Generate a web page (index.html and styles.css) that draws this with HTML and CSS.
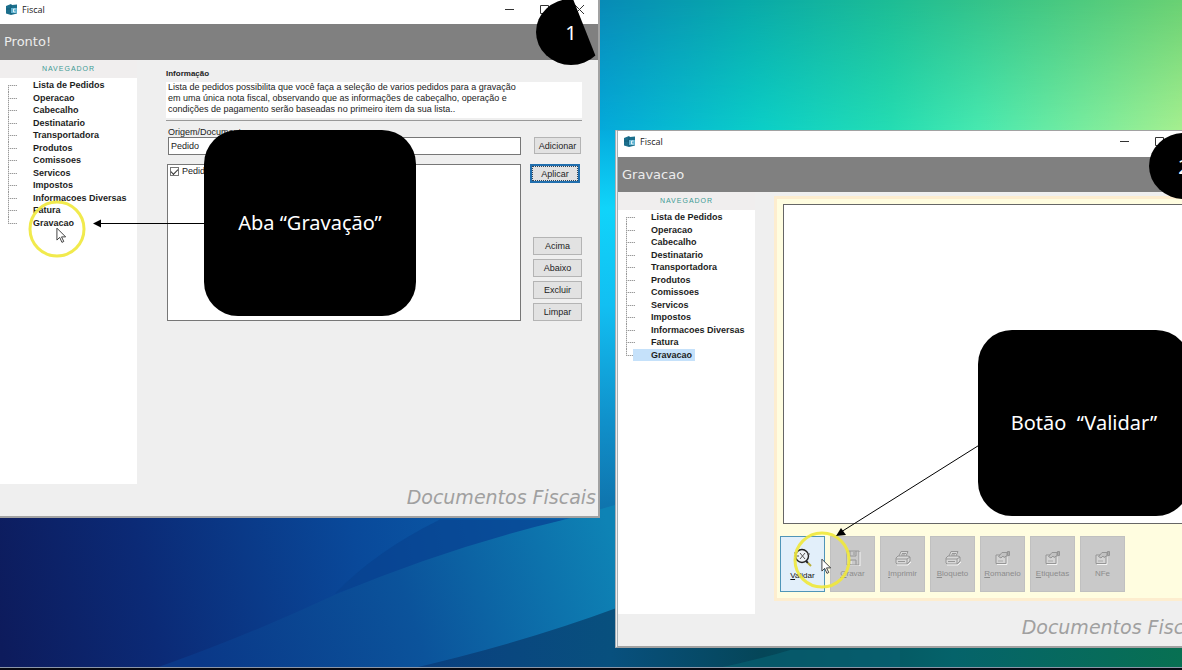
FILE: index.html
```html
<!DOCTYPE html>
<html lang="pt-BR">
<head>
<meta charset="utf-8">
<title>Fiscal</title>
<link rel="stylesheet" href="styles.css">
</head>
<body>
<svg class="defs" aria-hidden="true">
  <symbol id="i-app" viewBox="0 0 12 11"><path d="M0 2L5 0l1 1 5-.5v9L5 11 0 9.500z" fill="#1c6f8c"/><path d="M5 1v9M0 5h5" stroke="#0d4f6b" stroke-width=".6"/><path d="M5 4h6v5H5z" fill="#5fb2d0"/><path d="M9.500 5H7.500v3h2" stroke="#fff" stroke-width=".8" fill="none"/></symbol>
  <symbol id="i-cursor" viewBox="0 0 12 18"><path d="M1 1v13l3-3 2.500 5.500 2-1L6 10.500h4.500z" fill="#fff" stroke="#333" stroke-width="1"/></symbol>
  <symbol id="i-print" viewBox="0 0 18 16"><g fill="#d8d8d8" stroke="#969696"><path d="M5 6l2-4.500h7L12 6"/><path d="M2 8l2-2h10l2 1v4l-3 3H3l-1-1z"/><path d="M2 9h11l3-2M13 9v5M4 11.500h7M8 3.500h4M7 5h4" fill="none"/></g><path d="M3 15h11l3-3" fill="none" stroke="#f4f4f4"/></symbol>
  <symbol id="i-prop" viewBox="0 0 18 16"><path d="M3 14.500h10V7M3 5.500h3" fill="none" stroke="#f4f4f4"/><path d="M2 5h10v8.500H2z" fill="#d4d4d4" stroke="#959595"/><path d="M4.500 6.500l3.500-4h5v3l-3 2-1-1.500-2 2z" fill="#c2c2c2" stroke="#959595"/><path d="M13.500 1.500h2v4h-2z" fill="#aaa" stroke="#959595"/><path d="M4 11h5" stroke="#aaa"/></symbol>
  <symbol id="i-save" viewBox="0 0 18 16"><g fill="none" stroke="#969696"><path d="M3 1h12v14H3z"/><path d="M6 1v5h6V1M6 15v-5h6v5M10 2v3"/></g><path d="M4 2v12M16 2v14H4M7 11v3" stroke="#f4f4f4" fill="none"/></symbol>
  <symbol id="i-check" viewBox="0 0 20 20"><circle cx="9" cy="8" r="6.500" fill="#eef3f6" stroke="#222" stroke-width="1.400"/><path d="M1 5h3M1 8h5M1 11h3M7 5l5 6M12 5l-5 6M14 6h3" stroke="#555" fill="none"/><path d="M13 13l2 2" stroke="#222" stroke-width="2"/><path d="M15 15l3 3" stroke="#b9ae3a" stroke-width="2"/></symbol>
</svg>
<div class="desktop">
  <svg class="wallpaper" viewBox="0 0 1182 668" preserveAspectRatio="none" aria-hidden="true">
    <defs>
      <linearGradient id="top" gradientUnits="userSpaceOnUse" x1="600" x2="1182" y1="0" y2="0"><stop offset="0" stop-color="#088bb7"/><stop offset=".25" stop-color="#08a9aa"/><stop offset=".5" stop-color="#1dbd95"/><stop offset=".75" stop-color="#42c783"/><stop offset="1" stop-color="#6ad173"/></linearGradient>
      <linearGradient id="low" gradientUnits="userSpaceOnUse" x1="600" x2="1182" y1="0" y2="0"><stop offset="0" stop-color="#04abdc"/><stop offset=".28" stop-color="#0cd0c8"/><stop offset=".5" stop-color="#25deb4"/><stop offset=".65" stop-color="#48eab1"/><stop offset="1" stop-color="#a8f090"/></linearGradient>
      <linearGradient id="fade" gradientUnits="userSpaceOnUse" x1="0" x2="0" y1="0" y2="135"><stop offset="0" stop-color="#000"/><stop offset="1" stop-color="#fff"/></linearGradient>
      <mask id="down"><rect width="1182" height="668" fill="url(#fade)"/></mask>
      <linearGradient id="gap" gradientUnits="userSpaceOnUse" x1="0" x2="0" y1="130" y2="518"><stop offset="0" stop-color="#04acde"/><stop offset=".2" stop-color="#10d4fa"/><stop offset=".45" stop-color="#12bff2"/><stop offset=".75" stop-color="#1090ca"/><stop offset="1" stop-color="#0f70a9"/></linearGradient>
      <linearGradient id="deep" gradientUnits="userSpaceOnUse" x1="0" x2="600" y1="640" y2="518"><stop offset="0" stop-color="#0d1b5c"/><stop offset=".25" stop-color="#0b2a76"/><stop offset=".6" stop-color="#09499a"/><stop offset="1" stop-color="#0b68b0"/></linearGradient>
      <linearGradient id="wave" gradientUnits="userSpaceOnUse" x1="200" x2="610" y1="660" y2="530"><stop offset="0" stop-color="#0a3888"/><stop offset=".5" stop-color="#0b539b"/><stop offset="1" stop-color="#0e83b5"/></linearGradient>
      <linearGradient id="floor" gradientUnits="userSpaceOnUse" x1="420" x2="1182" y1="0" y2="0"><stop offset="0" stop-color="#0a3f80"/><stop offset=".25" stop-color="#08507e"/><stop offset=".45" stop-color="#054658"/><stop offset=".7" stop-color="#05636a"/><stop offset="1" stop-color="#087052"/></linearGradient>
    </defs>
    <rect width="1182" height="668" fill="url(#top)"/>
    <rect width="1182" height="668" fill="url(#low)" mask="url(#down)"/>
    <rect x="590" y="130" width="30" height="390" fill="url(#gap)"/>
    <path d="M0 510H620V668H0z" fill="url(#deep)"/>
    <path d="M335 592Q375 550 440 518H565Q450 550 335 592z" fill="#07408c" opacity=".55"/>
    <path d="M150 668Q240 637 335 593Q450 545 565 518L620 502V668z" fill="url(#wave)"/>
    <path d="M405 668Q520 642 620 605V640H1182V668z" fill="url(#floor)"/>
    <path d="M708 668Q750 660 790 648H900V668z" fill="#076070" opacity=".7"/>
  </svg>

  <section class="step step-one">
    <div class="window">
      <header class="titlebar"><svg class="app-icon"><use href="#i-app"/></svg><span class="app-name">Fiscal</span>
        <button class="control" aria-label="Minimizar"><svg viewBox="0 0 11 11"><path d="M1 5.500h9"/></svg></button>
        <button class="control" aria-label="Maximizar"><svg viewBox="0 0 11 11"><path d="M1.500 1.500h8v8h-8z"/></svg></button>
        <button class="control" aria-label="Fechar"><svg viewBox="0 0 11 11"><path d="M1 1l9 9M10 1L1 10"/></svg></button>
      </header>
      <h1 class="status">Pronto!</h1>
      <div class="body">
        <nav class="sidebar"><h2 class="nav-title">NAVEGADOR</h2>
          <ul class="tree"><li><a href="#">Lista de Pedidos</a></li><li><a href="#">Operacao</a></li><li><a href="#">Cabecalho</a></li><li><a href="#">Destinatario</a></li><li><a href="#">Transportadora</a></li><li><a href="#">Produtos</a></li><li><a href="#">Comissoes</a></li><li><a href="#">Servicos</a></li><li><a href="#">Impostos</a></li><li><a href="#">Informacoes Diversas</a></li><li><a href="#">Fatura</a></li><li><a href="#">Gravacao</a></li></ul>
        </nav>
        <main class="form">
          <h3 class="info-title">Informação</h3>
          <p class="info">Lista de pedidos possibilita que você faça a seleção de varios pedidos para a gravação<br>em uma única nota fiscal, observando que as informações de cabeçalho, operação e<br>condições de pagamento serão baseadas no primeiro item da sua lista..</p>
          <hr class="rule">
          <label class="field-label" for="origin">Origem/Documento</label>
          <div class="row"><input class="field" id="origin" type="text" value="Pedido"><button class="btn add">Adicionar</button></div>
          <div class="row list-row">
            <div class="listbox"><label class="item"><input class="tick" type="checkbox" checked>Pedido</label></div>
            <div class="actions"><button class="btn primary">Aplicar</button><div class="stack"><button class="btn">Acima</button><button class="btn">Abaixo</button><button class="btn">Excluir</button><button class="btn">Limpar</button></div></div>
          </div>
        </main>
      </div>
      <footer class="footer">Documentos Fiscais</footer>
    </div>
    <svg class="marks" viewBox="0 0 600 518" aria-hidden="true">
      <circle cx="57" cy="229" r="27" fill="none" stroke="#f0e83a" stroke-width="3" opacity=".9"/>
      <use href="#i-cursor" x="56" y="227" width="11" height="17"/>
      <path d="M99 223.500H206" stroke="#000"/><path d="M93 223.500l8-4v8z"/>
    </svg>
    <div class="callout">Aba “Gravação”</div>
    <div class="badge"><svg viewBox="0 0 70 66" aria-hidden="true"><ellipse cx="35" cy="33" rx="35" ry="33"/></svg><span>1</span></div>
  </section>

  <section class="step step-two">
    <div class="window">
      <header class="titlebar"><svg class="app-icon"><use href="#i-app"/></svg><span class="app-name">Fiscal</span>
        <button class="control" aria-label="Minimizar"><svg viewBox="0 0 11 11"><path d="M1 5.500h9"/></svg></button>
        <button class="control" aria-label="Maximizar"><svg viewBox="0 0 11 11"><path d="M1.500 1.500h8v8h-8z"/></svg></button>
        <button class="control" aria-label="Fechar"><svg viewBox="0 0 11 11"><path d="M1 1l9 9M10 1L1 10"/></svg></button>
      </header>
      <h1 class="status">Gravacao</h1>
      <div class="body">
        <nav class="sidebar"><h2 class="nav-title">NAVEGADOR</h2>
          <ul class="tree"><li><a href="#">Lista de Pedidos</a></li><li><a href="#">Operacao</a></li><li><a href="#">Cabecalho</a></li><li><a href="#">Destinatario</a></li><li><a href="#">Transportadora</a></li><li><a href="#">Produtos</a></li><li><a href="#">Comissoes</a></li><li><a href="#">Servicos</a></li><li><a href="#">Impostos</a></li><li><a href="#">Informacoes Diversas</a></li><li><a href="#">Fatura</a></li><li class="selected"><a href="#">Gravacao</a></li></ul>
        </nav>
        <main class="record">
          <div class="output"></div>
          <div class="tools">
            <button class="tool active"><svg><use href="#i-check"/></svg><span><u>V</u>alidar</span></button>
            <button class="tool" disabled><svg><use href="#i-save"/></svg><span><u>G</u>ravar</span></button>
            <button class="tool" disabled><svg><use href="#i-print"/></svg><span><u>I</u>mprimir</span></button>
            <button class="tool" disabled><svg><use href="#i-print"/></svg><span><u>B</u>loqueto</span></button>
            <button class="tool" disabled><svg><use href="#i-prop"/></svg><span><u>R</u>omaneio</span></button>
            <button class="tool" disabled><svg><use href="#i-prop"/></svg><span><u>E</u>tiquetas</span></button>
            <button class="tool" disabled><svg><use href="#i-prop"/></svg><span>NFe</span></button>
          </div>
        </main>
      </div>
      <footer class="footer">Documentos Fiscais</footer>
    </div>
    <svg class="marks" viewBox="0 0 600 518" aria-hidden="true">
      <circle cx="207" cy="430" r="27" fill="none" stroke="#f0e83a" stroke-width="3" opacity=".9"/>
      <use href="#i-cursor" x="206" y="428" width="11" height="17"/>
      <path d="M226 402L366 314" stroke="#000"/><path d="M221 406l5-8 5 7z"/>
    </svg>
    <div class="callout">Botão  “Validar”</div>
    <div class="badge"><svg viewBox="0 0 70 66" aria-hidden="true"><ellipse cx="35" cy="33" rx="35" ry="33"/></svg><span>2</span></div>
  </section>
  <div class="taskbar"></div>
</div>
</body>
</html>
```
FILE: styles.css
```css
* { box-sizing: border-box; }
body { margin: 0; font-family: "Liberation Sans", Arial, sans-serif; color: #222; }
button, input { font: inherit; color: inherit; }
h1, h2, h3, p, ul { margin: 0; padding: 0; }
.defs { position: absolute; width: 0; height: 0; }

.desktop { position: relative; min-height: 100vh; overflow: hidden; background: #0a4a90; }
.wallpaper { position: absolute; inset: 0; width: 100%; height: 100%; }
.taskbar { position: absolute; inset: auto 0 0; height: 3px; background: #060810; border-top: 1px solid #8b96a8; }

/* Windows sit freely on the desktop */
.step { position: absolute; width: calc(50vw + 9px); }
.step-one { left: 0; top: 0; }
.step-two { left: calc(50vw + 24px); top: 130px; }
.window { display: flex; flex-direction: column; min-height: 518px; background: #efefef; border: solid #a2a2a2; border-width: 0 2px 2px 0; }
.step-two .window { border-width: 1px 2px 2px 3px; border-left: 3px double #a8b0b6; }

.titlebar { display: flex; align-items: center; height: 24px; padding: 0 13px 6px 6px; background: #fff; font: 9px "Open Sans", sans-serif; }
.step-two .titlebar { height: 26px; padding-bottom: 5px; }
.app-icon { width: 12px; height: 11px; }
.app-name { flex: 1; padding-left: 4px; }
.control { width: 11px; height: 11px; margin-left: 24px; padding: 0; border: 0; background: none; }
.control svg { display: block; width: 11px; height: 11px; fill: none; stroke: #333; }
.status { height: 36px; padding-left: 4px; background: #808080; color: #ececec; font: 13px/36px "DejaVu Sans", sans-serif; }
.step-two .status { height: 35px; }

.body { display: flex; flex: 1; }
.sidebar { width: 137px; background: #fff; }
.nav-title { height: 18px; background: #f0eeee; color: #3d9a94; font: 7px/18px "Liberation Sans", Arial, sans-serif; letter-spacing: 1px; text-align: center; }
.tree { display: grid; grid-auto-rows: 1fr; height: 150px; margin-top: 1px; margin-left: 8px; list-style: none; font-size: 9px; font-weight: bold; line-height: 12px; }
.tree li { display: flex; background: repeating-linear-gradient(90deg, #999 0 1px, #ddd 1px 2px) 0 6px / 9px 1px no-repeat, repeating-linear-gradient(#999 0 1px, #ddd 1px 2px) 0 0 / 1px 100% no-repeat; }
.tree li:first-child { background-position: 0 6px, 0 6px; }
.tree li:last-child { background-size: 9px 1px, 1px 6px; }
.tree a { margin-left: 7px; padding: 0 3px 0 18px; color: #1d1d1d; text-decoration: none; }
.selected a { background: #c5e1fa; }
.footer { height: 32px; padding-right: 2px; color: #a0a0a0; font: italic 19px/26px "DejaVu Sans", sans-serif; text-align: right; white-space: nowrap; }

/* Order selection form */
.form { flex: 1; padding: 9px 16px 0 29px; font-size: 9px; }
.info-title { font-size: 8px; line-height: 10px; }
.info { margin-top: 3px; padding: 0 2px 3px; background: #fff; font-size: 9px; line-height: 11px; white-space: nowrap; }
.rule { margin: 2px 0 6px; border: 0; border-top: 1px solid #999; }
.field-label { display: block; padding-left: 2px; line-height: 10px; }
.row { display: flex; justify-content: space-between; }
.field { flex: 1; height: 18px; margin-left: 2px; padding: 0 2px; border: 1px solid #777; background: #fff; border-radius: 0; }
.btn { width: 49px; height: 18px; padding: 0; border: 1px solid #b4b4b4; border-radius: 0; background: #e2e2e2; }
.add { width: 47px; height: 17px; margin: 0 1px 0 13px; }
.list-row { margin-top: 9px; }
.listbox { flex: 1; margin-left: 1px; border: 1px solid #777; background: #fff; }
.item { display: flex; align-items: center; gap: 3px; padding: 1px 2px; }
.tick { appearance: none; width: 9px; height: 9px; margin: 0; border: 1px solid #777; background: #fff; }
.tick::after { content: ""; display: block; width: 6px; height: 3px; margin-top: 1px; border: solid #333; border-width: 0 0 1px 1px; transform: rotate(-45deg); }
.actions { display: flex; flex-direction: column; width: 61px; padding-left: 9px; }
.primary { width: 50px; height: 19px; border: 2px solid #216fae; outline: 1px dotted #345; outline-offset: -3px; }
.stack { display: flex; flex-direction: column; gap: 4px; margin-top: 54px; padding-left: 3px; }

/* Record page */
.record { display: flex; flex: 1; flex-direction: column; gap: 12px; margin: 4px 0 13px 19px; padding: 5px 3px 6px; background: #fffde0; border: 3px solid #fdedcf; border-right: 0; }
.output { flex: 1; margin-left: 3px; border: 1px solid #666; background: #fff; }
.tools { display: flex; gap: 5px; }
.tool { display: flex; flex-direction: column; align-items: center; justify-content: center; gap: 3px; width: 45px; height: 56px; padding: 0; border: 1px solid #c0c0c0; background: #c9c9c9; color: #8c8c8c; font-size: 8px; }
.tool svg { width: 18px; height: 16px; }
.tool.active { border-color: #4f95b8; background: #e2effa; color: #111; }
.tool.active svg { width: 20px; height: 20px; }

/* Tutorial annotations */
.marks { position: absolute; left: 0; top: 0; width: 600px; height: 518px; }
.callout { position: absolute; display: grid; place-items: center; width: 212px; height: 186px; border-radius: 34px; background: #000; color: #fff; font: 20px/28px "Noto Sans", sans-serif; white-space: pre; }
.step-one .callout { left: 204px; top: 130px; }
.step-two .callout { left: 363px; top: 200px; }
.badge { position: absolute; width: 70px; height: 66px; display: grid; place-items: center; color: #fff; font: 20px "Noto Sans", sans-serif; }
.badge > * { grid-area: 1 / 1; }
.badge svg { width: 70px; height: 66px; }
.badge span { z-index: 1; }
.step-one .badge { left: 536px; top: -1px; }
.step-one .badge svg { clip-path: polygon(0 0, 37px 0, 60px 58px, 60px 66px, 0 66px); }
.step-two .badge { left: 534px; top: 3px; }
```
